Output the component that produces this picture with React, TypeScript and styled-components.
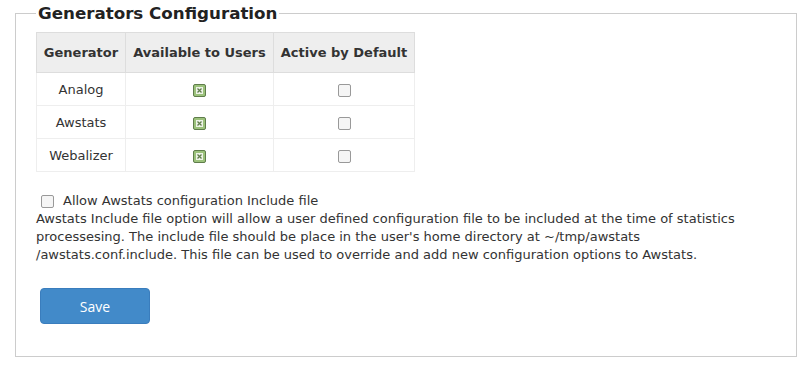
import React from 'react';
import styled, { createGlobalStyle } from 'styled-components';

const GlobalStyle = createGlobalStyle`
    body {
        margin: 0;
        background: #fff;
        font-family: "DejaVu Sans", sans-serif;
        font-size: 13px;
        color: #333;
    }
`;

const Page = styled.div`
    padding: 0 9px 0 15px;
`;

const Fieldset = styled.fieldset`
    margin: 0;
    padding: 6px 20px 32px 20px;
    border: 1px solid #ccc;
    min-width: 0;
`;

const Legend = styled.legend`
    padding: 0 2px;
    font-size: 16.7px;
    font-weight: bold;
    line-height: 26px;
    color: #222;
`;

const Table = styled.table`
    border-collapse: collapse;
    margin: 0;
`;

const HeadCell = styled.th<{ $width: number }>`
    width: ${(p) => p.$width}px;
    height: 40px;
    padding: 0 4px;
    box-sizing: border-box;
    background: #eee;
    border: 1px solid #ddd;
    font-weight: bold;
    color: #333;
    text-align: center;
    white-space: nowrap;
`;

const Cell = styled.td`
    height: 32px;
    padding: 0 4px;
    border: 1px solid #eee;
    text-align: center;
    vertical-align: middle;
`;

const CheckedBox = styled.span`
    display: inline-flex;
    align-items: center;
    justify-content: center;
    width: 13px;
    height: 13px;
    box-sizing: border-box;
    border: 1px solid #5f7d4b;
    border-radius: 2px;
    background: #9cc27c;
    vertical-align: middle;
`;

const EmptyBox = styled.span`
    display: inline-block;
    width: 13px;
    height: 13px;
    box-sizing: border-box;
    border: 1px solid #999;
    border-radius: 2px;
    background: #f5f5f5;
    vertical-align: middle;
`;

const OptionRow = styled.label`
    display: flex;
    align-items: center;
    gap: 9px;
    margin: 20px 0 0 5px;
    line-height: 18px;
`;

const Help = styled.p`
    margin: 0;
    line-height: 18px;
    max-width: 700px;
`;

const SaveButton = styled.button`
    display: block;
    margin: 24px 0 0 4px;
    width: 110px;
    height: 36px;
    border: 1px solid #3a7dbd;
    border-radius: 4px;
    background: #428ac9;
    color: #fff;
    font-family: "Open Sans", sans-serif;
    font-size: 14px;
    cursor: pointer;
`;

const Checked = () => (
    <CheckedBox>
        <svg width="7" height="7" viewBox="0 0 7 7">
            <rect x="0" y="0" width="7" height="7" fill="#eef3e8" />
            <path d="M1.5 1.5 L5.5 5.5 M5.5 1.5 L1.5 5.5" stroke="#5f7d4b" strokeWidth="1.3" />
        </svg>
    </CheckedBox>
);

const generators = ['Analog', 'Awstats', 'Webalizer'];

export default function App() {
    return (
        <Page>
            <GlobalStyle />
            <Fieldset>
                <Legend>Generators Configuration</Legend>
                <Table>
                    <thead>
                        <tr>
                            <HeadCell $width={89}>Generator</HeadCell>
                            <HeadCell $width={148}>Available to Users</HeadCell>
                            <HeadCell $width={141}>Active by Default</HeadCell>
                        </tr>
                    </thead>
                    <tbody>
                        {generators.map((g) => (
                            <tr key={g}>
                                <Cell>{g}</Cell>
                                <Cell>
                                    <Checked />
                                </Cell>
                                <Cell>
                                    <EmptyBox />
                                </Cell>
                            </tr>
                        ))}
                    </tbody>
                </Table>
                <OptionRow>
                    <EmptyBox />
                    Allow Awstats configuration Include file
                </OptionRow>
                <Help>
                    Awstats Include file option will allow a user defined configuration file to be included at the time of statistics
                    processesing. The include file should be place in the user's home directory at ~/tmp/awstats
                    /awstats.conf.include. This file can be used to override and add new configuration options to Awstats.
                </Help>
                <SaveButton>Save</SaveButton>
            </Fieldset>
        </Page>
    );
}
